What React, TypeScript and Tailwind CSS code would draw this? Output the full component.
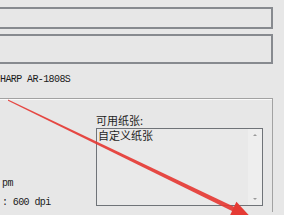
import React from 'react';

const mono = { fontFamily: '"Liberation Mono", "Noto Sans CJK SC", monospace' };
const cjk = { fontFamily: '"Noto Sans CJK SC", "Noto Sans", sans-serif' };

const Arrow: React.FC = () => (
  <svg className="absolute inset-0 pointer-events-none" width="284" height="215" viewBox="0 0 284 215">
    <polygon points="8,99.6 8,100.8 233,211.5 234.5,207" fill="#e53a34" opacity="0.92" />
    <polygon points="236.4,201.8 229.6,216.2 251,217.5" fill="#e53a34" />
  </svg>
);

const App: React.FC = () => {
  return (
    <div className="w-[284px] h-[215px] overflow-hidden relative bg-[#e7e7e7]">
      <div className="flex flex-col pr-[11px] pt-[7px] ml-[-4px]">
        <div className="h-[22px] border-2 border-[#878a8f]" />
        <div className="mt-[5px] h-[30px] border-2 border-[#878a8f]" />
        <div className="h-[34px] pt-[10px] pl-[4px]">
          <div className="text-[10px] leading-[12px] tracking-[-0.6px] text-[#1a1a1a]" style={mono}>
            HARP AR-1808S
          </div>
        </div>
        <div className="flex-1 h-[130px] border-t border-r border-[#a2a2a2] shadow-[inset_1px_1px_0_#fafafa] flex">
          <div className="w-[100px] shrink-0 pt-[75px] pl-[6px] text-[10px] tracking-[-0.6px] text-[#1a1a1a]" style={mono}>
            <div className="h-[19px] leading-[19px] whitespace-nowrap">pm</div>
            <div className="h-[19px] leading-[19px] whitespace-nowrap">: 600 dpi</div>
          </div>
          <div className="flex-1 pr-[9px] pt-[15px] flex flex-col">
            <div className="text-[11px] leading-[13px] text-[#1e1e1e]" style={cjk}>可用纸张:</div>
            <div className="mt-[1px] h-[78px] border border-[#6f7378] bg-[#e9e9e9] flex">
              <div className="flex-1 pl-[1px] text-[11px] leading-[13px] text-[#1e1e1e]" style={cjk}>自定义纸张</div>
              <div className="w-[14px] bg-[#eeeeee] flex flex-col items-center justify-between py-[5px]">
                <div className="w-0 h-0 border-l-[2px] border-r-[2px] border-b-[2px] border-l-transparent border-r-transparent border-b-[#9a9a9a]" />
                <div className="w-0 h-0 border-l-[2px] border-r-[2px] border-t-[2px] border-l-transparent border-r-transparent border-t-[#9a9a9a]" />
              </div>
            </div>
          </div>
        </div>
      </div>
      <Arrow />
    </div>
  );
};

export default App;
